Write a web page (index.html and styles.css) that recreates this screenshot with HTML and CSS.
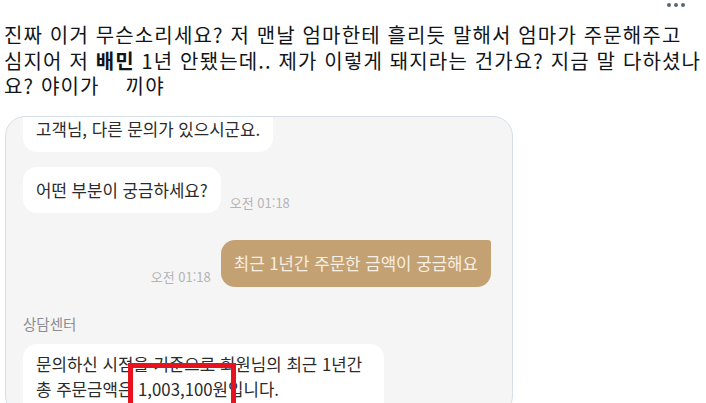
FILE: index.html
```html
<!DOCTYPE html>
<html lang="ko">
<head>
<meta charset="utf-8">
<link rel="stylesheet" href="styles.css">
</head>
<body>
<div class="topbar">
  <span class="more"><i></i><i></i><i></i></span>
</div>
<p class="tweet">진짜 이거 무슨소리세요? 저 맨날 엄마한테 흘리듯 말해서 엄마가 주문해주고<br>심지어 저 <b>배민</b> 1년 안됐는데.. 제가 이렇게 돼지라는 건가요? 지금 말 다하셨나<br>요? 야이가<span class="gap"></span>끼야</p>
<div class="card">
  <div class="row first">
    <div class="bubble">고객님, 다른 문의가 있으시군요.</div>
  </div>
  <div class="row r2">
    <div class="bubble">어떤 부분이 궁금하세요?</div>
    <span class="time">오전 01:18</span>
  </div>
  <div class="row mine">
    <span class="time">오전 01:18</span>
    <div class="bubble brown">최근 1년간 주문한 금액이 궁금해요</div>
  </div>
  <div class="sender">상담센터</div>
  <div class="row">
    <div class="bubble last">문의하신 시점을 기준으로 회원님의 최근 1년간<br>총 주문금액은 <span class="amount">1,003,100원<span class="mark"></span></span>입니다.</div>
  </div>
</div>
</body>
</html>
```
FILE: styles.css
```css
html, body {
  margin: 0;
  background: #ffffff;
}
body {
  font-family: "Noto Sans CJK KR", "Noto Sans", sans-serif;
  width: 706px;
  height: 403px;
  overflow: hidden;
}
.topbar {
  height: 22px;
  display: flex;
  justify-content: flex-end;
  padding-right: 21px;
}
.more {
  display: flex;
  gap: 3px;
  margin-top: 3px;
  height: 4px;
}
.more i {
  display: block;
  width: 4px;
  height: 4px;
  border-radius: 50%;
  background: #5b6670;
}
.tweet {
  margin: 0;
  padding: 0 0 0 4px;
  font-size: 20px;
  line-height: 25.5px;
  color: #111418;
  letter-spacing: 1.15px;
  white-space: nowrap;
}
.tweet b {
  font-weight: 700;
}
.gap {
  display: inline-block;
  width: 26px;
}
.card {
  margin: 17px 0 0 5px;
  width: 508px;
  height: 300px;
  box-sizing: border-box;
  border: 1px solid #d6dfe8;
  border-radius: 20px;
  background: #f5f5f6;
  padding: 0 21px 0 17px;
  overflow: hidden;
}
.row {
  display: flex;
  align-items: flex-end;
}
.row.first {
  margin-top: -11px;
}
.row.r2 {
  margin-top: 15px;
}
.row.mine {
  justify-content: flex-end;
  margin-top: 27px;
}
.bubble {
  background: #ffffff;
  border-radius: 14px;
  padding: 12px 13px;
  font-size: 16.8px;
  line-height: 22px;
  color: #2b2b2b;
  letter-spacing: 0;
  white-space: nowrap;
}
.bubble.brown {
  background: #c4a173;
  color: #f7efe2;
  border-top-right-radius: 3px;
  padding: 12px 13px 13px;
}
.bubble.last {
  padding: 8px 22px 20px 13px;
  line-height: 25px;
}
.amount {
  position: relative;
}
.time {
  font-size: 13px;
  color: #b4b4b4;
  margin: 0 9px 2px;
  line-height: 16px;
}
.mine .time {
  margin: 0 10px 2px 0;
}
.sender {
  margin-top: 28px;
  font-size: 14.5px;
  line-height: 17px;
  color: #8d8d8d;
  margin-bottom: 12px;
}
.mark {
  position: absolute;
  left: -10px;
  right: -8px;
  top: -14px;
  height: 60px;
  box-sizing: border-box;
  border: 5px solid #e8121e;
}
```
